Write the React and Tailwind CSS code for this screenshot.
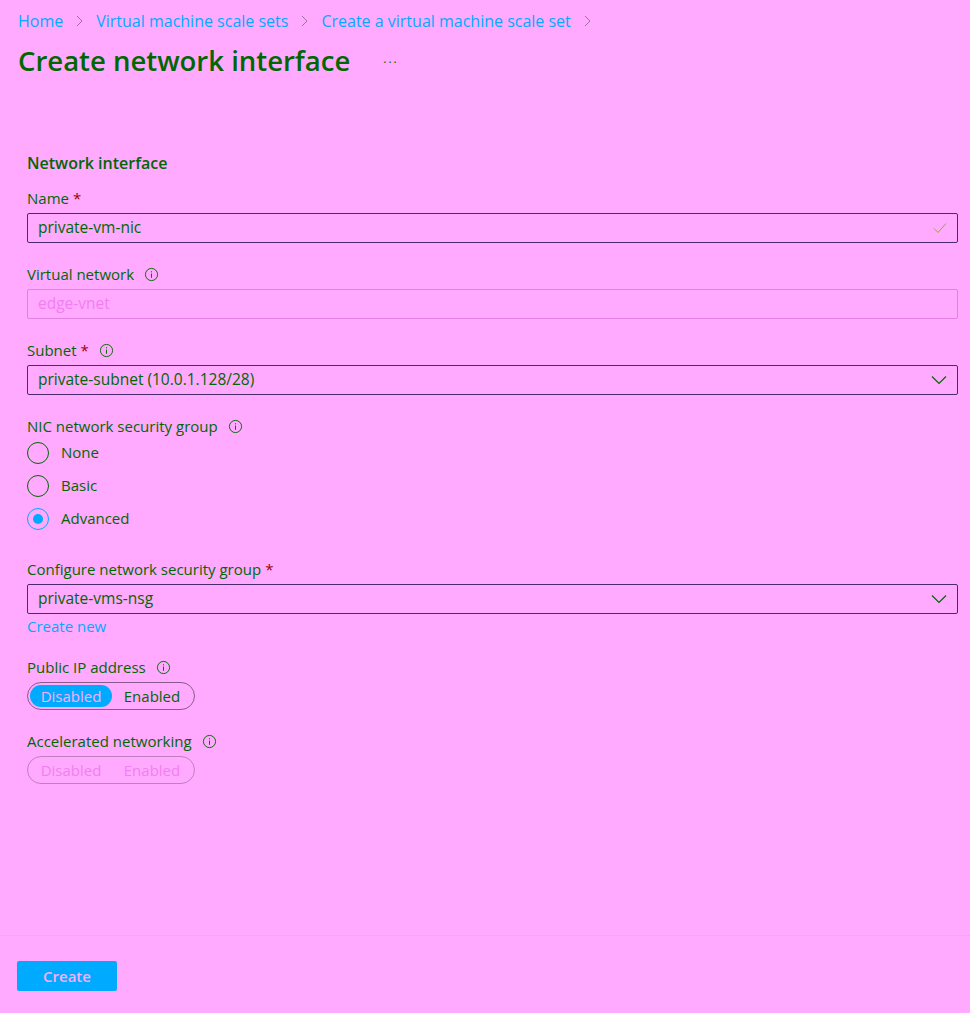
import React, { useState } from 'react';

const font = { fontFamily: '"Open Sans", "Noto Sans", sans-serif' };

function Info() {
  return (
    <svg width="15" height="15" viewBox="0 0 16 16" className="inline-block">
      <circle cx="8" cy="8" r="6.5" fill="none" stroke="#006600" strokeWidth="1" />
      <rect x="7.5" y="7" width="1" height="4.5" fill="#006600" />
      <rect x="7.5" y="4.5" width="1" height="1.2" fill="#006600" />
    </svg>
  );
}

function Chevron({ color = '#006600' }) {
  return (
    <svg width="16" height="10" viewBox="0 0 16 10">
      <path d="M1 1.5 L8 8.5 L15 1.5" fill="none" stroke={color} strokeWidth="1.2" />
    </svg>
  );
}

function Crumb() {
  return (
    <svg width="7" height="12" viewBox="0 0 7 12" className="mx-[13px]">
      <path d="M1 1 L6 6 L1 11" fill="none" stroke="#a070a0" strokeWidth="1" />
    </svg>
  );
}

function Label({ children, required, info }) {
  return (
    <div className="flex items-center h-[20px] text-[15px] text-[#006600]">
      <span>{children}</span>
      {required && <span className="ml-1 text-[#a00000]">*</span>}
      {info && (
        <span className="ml-[10px] flex items-center">
          <Info />
        </span>
      )}
    </div>
  );
}

function Radio({ label, checked, onClick }) {
  return (
    <div className="flex items-center h-[33px] cursor-pointer" onClick={onClick}>
      <div
        className={
          'w-[22px] h-[22px] rounded-full border flex items-center justify-center ' +
          (checked ? 'border-[#00aaff]' : 'border-[#006600]')
        }
      >
        {checked && <div className="w-[10px] h-[10px] rounded-full bg-[#00aaff]" />}
      </div>
      <span className="ml-[12px] text-[15px] text-[#006600]">{label}</span>
    </div>
  );
}

function Toggle({ value, disabled, onChange }) {
  return (
    <div
      className={
        'mt-[5px] w-[168px] h-[28px] rounded-full border flex items-center p-[2px] text-[15px] ' +
        (disabled ? 'border-[#c080c0]' : 'border-[#8a5a8a]')
      }
    >
      <div
        className={
          'w-[82px] h-full rounded-full flex items-center justify-center ' +
          (!disabled && value === 'off' ? 'bg-[#00aaff] text-[#ffaaff]' : disabled ? 'text-[#f080f0]' : 'text-[#006600]')
        }
        onClick={() => !disabled && onChange('off')}
      >
        Disabled
      </div>
      <div
        className={
          'flex-1 h-full rounded-full flex items-center justify-center ' +
          (!disabled && value === 'on' ? 'bg-[#00aaff] text-[#ffaaff]' : disabled ? 'text-[#f080f0]' : 'text-[#006600]')
        }
        onClick={() => !disabled && onChange('on')}
      >
        Enabled
      </div>
    </div>
  );
}

export default function App() {
  const [nsg, setNsg] = useState('advanced');
  const [ip, setIp] = useState('off');

  return (
    <div className="w-[970px] h-[1013px] bg-[#ffaaff] flex flex-col" style={font}>
      {/* header */}
      <div className="px-[18px] pt-[10px]">
        <div className="flex items-center text-[16px] text-[#00aaff] h-[22px]">
          <span>Home</span>
          <Crumb />
          <span>Virtual machine scale sets</span>
          <Crumb />
          <span>Create a virtual machine scale set</span>
          <Crumb />
        </div>
        <div className="flex items-center mt-[10px] h-[38px]">
          <h1 className="text-[27.5px] font-semibold text-[#006600]">Create network interface</h1>
          <span className="ml-[33px] text-[#006600] text-[12px] tracking-[2px] -mt-[4px]">...</span>
        </div>
      </div>

      {/* form */}
      <div className="flex-1 px-[27px] pt-[72px]">
        <div className="text-[16px] font-semibold text-[#006600] h-[22px] flex items-center">Network interface</div>

        <div className="mt-[14px]">
          <Label required>Name</Label>
          <div className="mt-[5px] h-[30px] w-[931px] border border-[#4b2a6b] rounded-[2px] flex items-center justify-between px-[10px] text-[15.5px] text-[#006600]">
            <span>private-vm-nic</span>
            <svg width="14" height="12" viewBox="0 0 14 12">
              <path d="M1 6.5 L5 10.5 L13 1.5" fill="none" stroke="#88bb00" strokeWidth="1" />
            </svg>
          </div>
        </div>

        <div className="mt-[21px]">
          <Label info>Virtual network</Label>
          <div className="mt-[5px] h-[30px] w-[931px] border border-[#e080e0] rounded-[2px] flex items-center px-[10px] text-[15.5px] text-[#f080f0]">
            edge-vnet
          </div>
        </div>

        <div className="mt-[21px]">
          <Label required info>Subnet</Label>
          <div className="mt-[5px] h-[30px] w-[931px] border border-[#4b2a6b] rounded-[2px] flex items-center justify-between px-[10px] text-[15.5px] text-[#006600]">
            <span>private-subnet (10.0.1.128/28)</span>
            <Chevron />
          </div>
        </div>

        <div className="mt-[21px]">
          <Label info>NIC network security group</Label>
          <div>
            <Radio label="None" checked={nsg === 'none'} onClick={() => setNsg('none')} />
            <Radio label="Basic" checked={nsg === 'basic'} onClick={() => setNsg('basic')} />
            <Radio label="Advanced" checked={nsg === 'advanced'} onClick={() => setNsg('advanced')} />
          </div>
        </div>

        <div className="mt-[24px]">
          <Label required>Configure network security group</Label>
          <div className="mt-[5px] h-[30px] w-[931px] border border-[#4b2a6b] rounded-[2px] flex items-center justify-between px-[10px] text-[15.5px] text-[#006600]">
            <span>private-vms-nsg</span>
            <Chevron />
          </div>
          <div className="text-[15px] text-[#00aaff] h-[24px] flex items-center">Create new</div>
        </div>

        <div className="mt-[19px]">
          <Label info>Public IP address</Label>
          <Toggle value={ip} onChange={setIp} />
        </div>

        <div className="mt-[21px]">
          <Label info>Accelerated networking</Label>
          <Toggle value="off" disabled />
        </div>
      </div>

      {/* footer */}
      <div className="border-t border-[#ffa0f8] h-[78px] px-[17px] pt-[25px]">
        <button className="w-[100px] h-[30px] bg-[#00aaff] rounded-[2px] text-[#ffaaff] text-[15px] font-semibold">
          Create
        </button>
      </div>
    </div>
  );
}
